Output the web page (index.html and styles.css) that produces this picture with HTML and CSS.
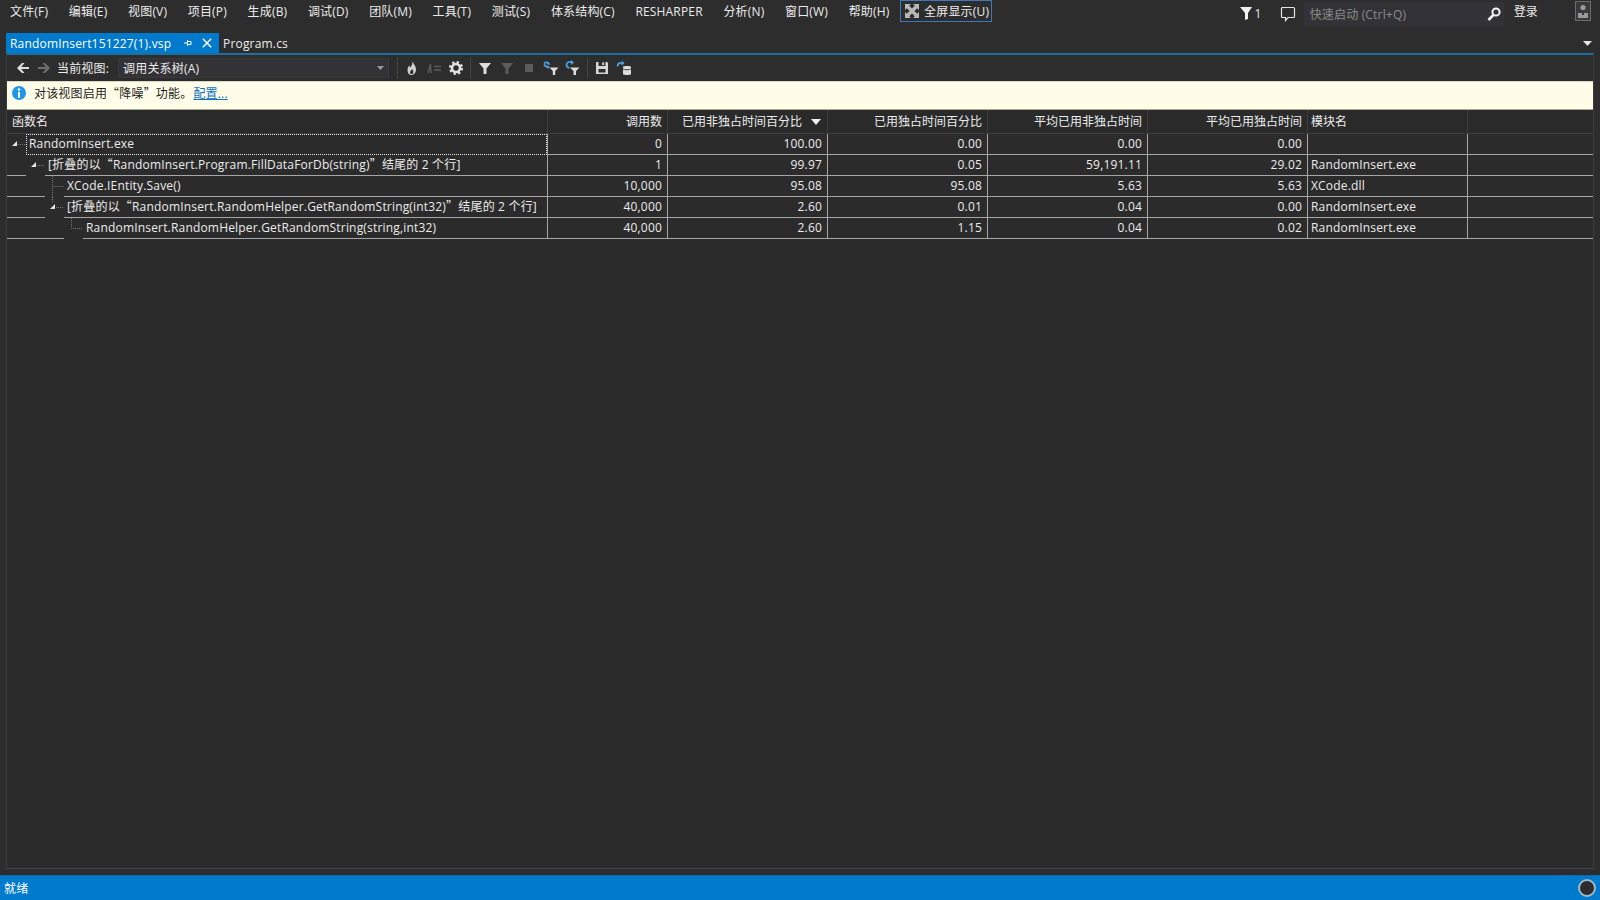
FILE: index.html
```html
<!DOCTYPE html>
<html lang="zh-CN">
<head>
<meta charset="utf-8">
<title>RandomInsert151227(1).vsp</title>
<link rel="stylesheet" href="styles.css">
</head>
<body>
<div class="app">
  <header class="titlebar">
    <nav class="menu">
      <span>文件(F)</span><span>编辑(E)</span><span>视图(V)</span><span>项目(P)</span><span>生成(B)</span><span>调试(D)</span><span>团队(M)</span><span>工具(T)</span><span>测试(S)</span><span>体系结构(C)</span><span>RESHARPER</span><span>分析(N)</span><span>窗口(W)</span><span>帮助(H)</span>
      <span class="fullscreen">
        <svg class="ico" viewBox="0 0 16 16"><path fill="#b8b8b8" d="M1 1h6L5.200 2.800 8 5.600l2.800-2.800L9 1h6v6l-1.800-1.800L10.400 8l2.800 2.800L15 9v6H9l1.800-1.800L8 10.400l-2.800 2.800L7 15H1V9l1.800 1.800L5.600 8 2.800 5.200 1 7z"/></svg>
        全屏显示(U)
      </span>
    </nav>
    <div class="title-right">
      <svg class="filter-flag" viewBox="0 0 12 14"><path fill="#f1f1f1" d="M0 1h12L8 7v6L5 14V7z"/></svg>
      <span class="flag-count">1</span>
      <svg class="comment" viewBox="0 0 16 16"><path fill="none" stroke="#e6e6e6" stroke-width="1.2" d="M2.5 1.5h11a1 1 0 0 1 1 1v8a1 1 0 0 1-1 1H8l-2.5 3v-3h-3a1 1 0 0 1-1-1v-8a1 1 0 0 1 1-1z"/></svg>
      <div class="quick">
        <span>快速启动 (Ctrl+Q)</span>
        <svg class="ico" viewBox="0 0 16 16"><circle cx="10" cy="6" r="3.6" fill="none" stroke="#f4f4f4" stroke-width="2"/><path stroke="#f4f4f4" stroke-width="2.6" d="M7.400 8.800 2.500 14"/></svg>
      </div>
      <span class="login">登录</span>
      <svg class="user" viewBox="0 0 16 20"><rect x=".5" y=".5" width="15" height="19" fill="#3a3a3c" stroke="#6b6b6b"/><circle cx="8" cy="6.500" r="2.600" fill="#9a9a9a"/><path fill="#9a9a9a" d="M3 17v-5h4v2h2v-2h4v5z"/></svg>
    </div>
  </header>

  <div class="tabs">
    <div class="tab active">
      <span class="tab-name">RandomInsert151227(1).vsp</span>
      <svg class="pin" viewBox="0 0 10 10"><path fill="none" stroke="#fff" d="M4.500 2v6M4.500 3.500H8v3H4.500M1 5h3.500"/></svg>
      <svg class="close" viewBox="0 0 10 10"><path stroke="#fff" stroke-width="1.500" d="M.8.8l8.400 8.400M9.200.8.8 9.200"/></svg>
    </div>
    <div class="tab">Program.cs</div>
    <svg class="tab-caret" viewBox="0 0 9 5"><path fill="#e6e6e6" d="M0 0h9L4.500 5z"/></svg>
  </div>

  <main class="panel">
    <div class="toolbar">
      <svg class="arrow" viewBox="0 0 14 12"><path fill="#e0e0e0" d="M6 1 1 6l5 5h2.500L5.200 7H13V5H5.200L8.500 1z"/></svg>
      <svg class="arrow dim" viewBox="0 0 14 12"><path fill="#6e6e6e" d="M8 1l5 5-5 5H5.500L8.800 7H1V5h7.800L5.500 1z"/></svg>
      <span class="view-label">当前视图:</span>
      <div class="combo"><span>调用关系树(A)</span><svg class="combo-caret" viewBox="0 0 7 4"><path fill="#999" d="M0 0h7L3.500 4z"/></svg></div>
      <i class="sep first"></i>
      <svg class="ico" viewBox="0 0 16 16"><path fill="#cfcfcf" d="M8.500 1c.5 2.500 3.500 4.500 3.500 8.500 0 3-2 5.500-4.500 5.500S3.500 13 3.500 10c0-2 1-3 1.500-4.500.7.700 1 1.500 1.200 2.300C7.500 6 8.800 3.500 8.500 1z"/><path fill="#2d2d2d" d="M8 9c.8 1 1.500 2 1.300 3.500-.2 1-.9 1.500-1.800 1.500-1 0-1.500-.9-1.500-1.800C6 11 7.500 10.500 8 9z"/></svg>
      <svg class="ico" viewBox="0 0 16 16"><path stroke="#5c5c5c" stroke-width="1.400" fill="none" d="M2 13 4.500 4 5 13M8 6.500h7M8 10h7"/></svg>
      <svg class="ico" viewBox="0 0 16 16"><circle cx="8" cy="8" r="5.800" fill="none" stroke="#e2e2e2" stroke-width="2.400" stroke-dasharray="2.300 2.250"/><circle cx="8" cy="8" r="4" fill="none" stroke="#e2e2e2" stroke-width="2.600"/></svg>
      <i class="sep"></i>
      <svg class="ico" viewBox="0 0 16 16"><path fill="#dcdcdc" d="M2 3h12L9.500 8.500V14h-3V8.500z"/></svg>
      <svg class="ico" viewBox="0 0 16 16"><path fill="#5c5c5c" d="M2 3h12L9.500 8.500V14h-3V8.500z"/></svg>
      <svg class="ico" viewBox="0 0 16 16"><rect x="4" y="4" width="8" height="8" fill="#5c5c5c"/></svg>
      <svg class="ico" viewBox="0 0 16 16"><path fill="none" stroke="#4aa3e8" stroke-width="1.700" d="M1 3.500c2-2 4-1 5 .5M1 4.500c1 2 2.500 2.500 5 2.500"/><path fill="#4aa3e8" d="M5 1.500 7.500 4.500H4zM4.500 5.500 7 7.200 4.500 9z"/><path fill="#dcdcdc" d="M6.500 7.500h9l-3.300 3.500v4H9.800v-4z"/></svg>
      <svg class="ico" viewBox="0 0 16 16"><path fill="none" stroke="#4aa3e8" stroke-width="1.700" d="M7 2.500c-2.500-1.500-5-.5-5.500 2.500 0 1.500 1 2.500 3 3"/><path fill="#4aa3e8" d="M6 0l3 2.500L6 5z"/><path fill="#dcdcdc" d="M5 7.500h9.500L11 11v4H8.500v-4z"/></svg>
      <i class="sep"></i>
      <svg class="ico" viewBox="0 0 16 16"><path fill="#d6d6d6" d="M2 2h2.500v4h7V2H13l1 1v11H2zM8.200 2.500h2v2.500h-2zM4.500 9v3.500h7V9z"/></svg>
      <svg class="ico" viewBox="0 0 16 16"><path fill="none" stroke="#4aa3e8" stroke-width="1.700" d="M1.500 6.500c0-3.500 3-4.500 5-3"/><path fill="#4aa3e8" d="M6 .5 8.500 3.500 5.500 5.500z"/><path fill="#dcdcdc" d="M7 6.800c0-1 8-1 8 0V14c0 1.400-8 1.400-8 0z"/><path stroke="#4a4a4a" d="M7 9c1.500 1 6.500 1 8 0" fill="none"/></svg>
    </div>

    <div class="info">
      <svg class="info-ico" viewBox="0 0 14 14"><circle cx="7" cy="7" r="7" fill="#1c97ea"/><circle cx="7" cy="3.500" r="1.300" fill="#fff"/><rect x="6" y="5.800" width="2" height="6" fill="#fff"/></svg>
      <span>对该视图启用<span class="cjk">“</span>降噪<span class="cjk">”</span>功能。</span>
      <a class="info-link" href="#">配置...</a>
    </div>

    <div class="grid">
      <div class="row head">
        <div class="cell name">函数名</div>
        <div class="cell num">调用数</div>
        <div class="cell sorted"><span>已用非独占时间百分比</span><svg class="sort" viewBox="0 0 10 6"><path fill="#f1f1f1" d="M0 0h10L5 6z"/></svg></div>
        <div class="cell num">已用独占时间百分比</div>
        <div class="cell num">平均已用非独占时间</div>
        <div class="cell num">平均已用独占时间</div>
        <div class="cell mod">模块名</div>
        <div class="cell"></div>
      </div>

      <div class="row">
        <div class="tree">
          <svg class="slot" viewBox="0 0 19 21"><path fill="#e6e6e6" d="M10 7v5H5z"/><path stroke="#777" stroke-dasharray="1 1" d="M11 10.500h8"/></svg>
          <div class="label focus">RandomInsert.exe</div>
        </div>
        <div class="cell num">0</div><div class="cell num">100.00</div><div class="cell num">0.00</div><div class="cell num">0.00</div><div class="cell num">0.00</div><div class="cell mod"></div><div class="cell"></div>
      </div>

      <div class="row">
        <div class="tree">
          <i class="indent one"></i>
          <svg class="slot" viewBox="0 0 19 21"><path fill="#e6e6e6" d="M10 7v5H5z"/><path stroke="#777" stroke-dasharray="1 1" d="M11 10.500h8"/></svg>
          <div class="label">[折叠的以<span class="cjk">“</span>RandomInsert.Program.FillDataForDb(string)<span class="cjk">”</span>结尾的 2 个行]</div>
        </div>
        <div class="cell num">1</div><div class="cell num">99.97</div><div class="cell num">0.05</div><div class="cell num">59,191.11</div><div class="cell num">29.02</div><div class="cell mod">RandomInsert.exe</div><div class="cell"></div>
      </div>

      <div class="row">
        <div class="tree">
          <i class="indent two"></i>
          <svg class="slot" viewBox="0 0 19 21"><path fill="none" stroke="#777" stroke-dasharray="1 1" d="M7.500 0v21M7.500 10.500H19"/></svg>
          <div class="label">XCode.IEntity.Save()</div>
        </div>
        <div class="cell num">10,000</div><div class="cell num">95.08</div><div class="cell num">95.08</div><div class="cell num">5.63</div><div class="cell num">5.63</div><div class="cell mod">XCode.dll</div><div class="cell"></div>
      </div>

      <div class="row">
        <div class="tree">
          <i class="indent two"></i>
          <svg class="slot" viewBox="0 0 19 21"><path fill="#e6e6e6" d="M10 7v5H5z"/><path stroke="#777" stroke-dasharray="1 1" d="M7.500 0v6M11 10.500h8"/></svg>
          <div class="label">[折叠的以<span class="cjk">“</span>RandomInsert.RandomHelper.GetRandomString(int32)<span class="cjk">”</span>结尾的 2 个行]</div>
        </div>
        <div class="cell num">40,000</div><div class="cell num">2.60</div><div class="cell num">0.01</div><div class="cell num">0.04</div><div class="cell num">0.00</div><div class="cell mod">RandomInsert.exe</div><div class="cell"></div>
      </div>

      <div class="row">
        <div class="tree">
          <i class="indent three"></i>
          <svg class="slot" viewBox="0 0 19 21"><path fill="none" stroke="#777" stroke-dasharray="1 1" d="M7.500 0v10.500H19"/></svg>
          <div class="label">RandomInsert.RandomHelper.GetRandomString(string,int32)</div>
        </div>
        <div class="cell num">40,000</div><div class="cell num">2.60</div><div class="cell num">1.15</div><div class="cell num">0.04</div><div class="cell num">0.02</div><div class="cell mod">RandomInsert.exe</div><div class="cell"></div>
      </div>
    </div>
  </main>

  <footer class="status">
    <span>就绪</span>
    <i class="status-dot"></i>
  </footer>
</div>
</body>
</html>
```

FILE: styles.css
```css
* { box-sizing: border-box; }
html, body { margin: 0; height: 100%; }
body {
  background: #2d2d2d;
  color: #ececec;
  font-family: "Open Sans", "Noto Sans CJK SC", sans-serif;
  font-size: 12px;
  letter-spacing: .18px;
  overflow: hidden;
}
.cjk { font-family: "Noto Sans CJK SC", sans-serif; line-height: 0; }
.app { display: flex; flex-direction: column; height: 900px; }
.ico { width: 16px; height: 16px; flex: none; }

.titlebar { height: 33px; display: flex; justify-content: space-between; flex: none; }
.menu { display: flex; padding-left: 10px; gap: 20.6px; height: 22px; align-items: center; }
.menu span { white-space: nowrap; }
.menu .fullscreen {
  display: flex; align-items: center; gap: 4px;
  height: 22px; margin-left: -10px; padding: 0 2px 0 3px;
  border: 1px solid #3a7ab8;
}
.title-right { display: flex; align-items: flex-start; }
.filter-flag { width: 12px; height: 14px; margin-top: 6px; }
.flag-count { margin: 5px 0 0 3px; }
.comment { width: 16px; height: 16px; margin: 6px 0 0 18px; }
.quick {
  width: 200px; height: 24px; margin: 2px 0 0 8px; padding: 0 2px 0 6px;
  display: flex; align-items: center; justify-content: space-between;
  background: #333337; color: #8a8a8a;
}
.login { margin: 2px 0 0 10px; }
.user { width: 16px; height: 20px; margin: 1px 9px 0 37px; }

.tabs { height: 20px; display: flex; align-items: center; padding-left: 6px; flex: none; }
.tab { height: 20px; display: flex; align-items: center; padding: 0 4px; }
.tab.active { width: 213px; background: #007acc; color: #fff; }
.tab-name { width: 169px; white-space: nowrap; }
.pin { width: 10px; height: 10px; margin-left: 4px; }
.close { width: 10px; height: 10px; margin-left: 9px; }
.tab-caret { width: 9px; height: 5px; margin-left: auto; margin-right: 8px; }

.panel {
  flex: 1; margin: 0 6px 6px 6px; min-height: 0;
  border-top: 2px solid #1c6f9f;
  border-right: 1px solid #3c3c3c;
  border-left: 1px solid #3c3c3c;
  border-bottom: 1px solid #444;
  display: flex; flex-direction: column;
  background: #2b2b2b;
}
.toolbar { height: 26px; padding-bottom: 1px; display: flex; align-items: center; flex: none; background: #2d2d2d; gap: 6px; }
.arrow { width: 14px; height: 12px; margin-left: 9px; }
.arrow.dim { margin-left: 1px; }
.view-label { white-space: nowrap; }
.combo {
  width: 271px; height: 20px; margin-left: 3px; padding: 0 4px;
  display: flex; align-items: center; justify-content: space-between;
  background: #333337; border: 1px solid #3a3a3d;
}
.combo-caret { width: 7px; height: 4px; }
.sep { width: 1px; height: 22px; background: #444; }
.sep.first { margin-left: 2px; }

.info {
  height: 29px; padding-bottom: 5px; padding-left: 5px; flex: none; display: flex; align-items: center;
  background: #fffde8; color: #1e1e1e;
  border-top: 1px solid #d8d6c4; border-bottom: 1px solid #a8a797;
}
.info-ico { width: 14px; height: 14px; margin-right: 8px; }
.info-link { color: #0e70c0; margin-left: 1px; }

.grid { display: flex; flex-direction: column; }
.row {
  display: grid;
  grid-template-columns: 541px 120px 160px 160px 160px 160px 160px 1fr;
  height: 21px;
}
.cell {
  border-right: 1px solid #a6a6a6; border-bottom: 1px solid #a6a6a6;
  padding: 0 5px; line-height: 20px; white-space: nowrap; overflow: hidden;
}
.cell:last-child { border-right: none; }
.num { text-align: right; }
.mod { padding-left: 3px; }
.head { height: 24px; background: #2a2a2a; letter-spacing: 0; }
.head .cell { border-color: #3e3e3e; line-height: 23px; }
.head .name { padding-left: 5px; }
.sorted { display: flex; align-items: center; justify-content: space-between; padding: 0 6px 0 14px; }
.sort { width: 10px; height: 6px; }

.tree { display: flex; border-right: 1px solid #a6a6a6; }
.slot { width: 19px; height: 21px; flex: none; }
.indent { display: block; flex: none; border-bottom: 1px solid #a6a6a6; }
.indent.one { width: 19px; }
.indent.two { width: 38px; }
.indent.three { width: 57px; }
.label {
  flex: 1; min-width: 0; padding-left: 3px; line-height: 20px;
  white-space: nowrap; border-bottom: 1px solid #a6a6a6;
}
.label.focus { outline: 1px dotted #e6e6e6; outline-offset: -1px; border-bottom: none; }

.status {
  height: 25px; flex: none; display: flex; align-items: center; justify-content: space-between;
  background: #007acc; color: #fff; padding: 0 4px; border-top: 1px solid #0a6aaa;
}
.status-dot {
  width: 18px; height: 18px; border-radius: 50%;
  background: #2d2d30; border: 2px solid #9fb8c8;
}
```
